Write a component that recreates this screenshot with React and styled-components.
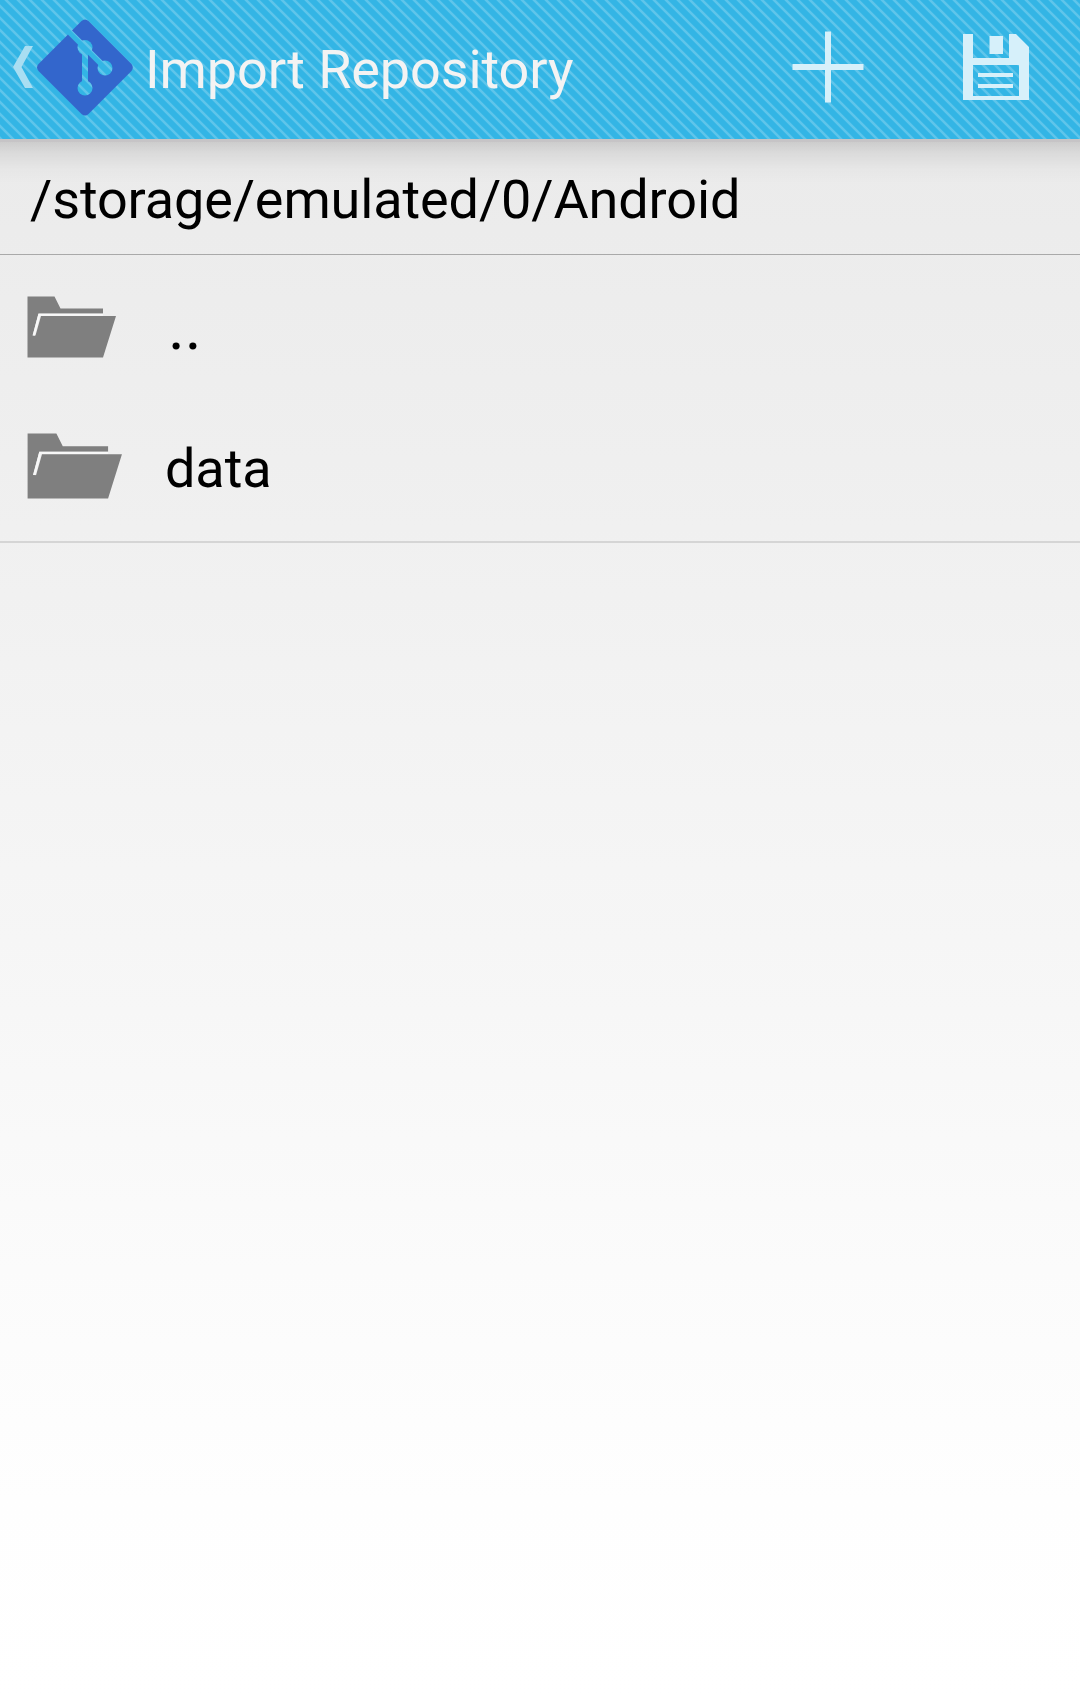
import React from "react";
import styled, { createGlobalStyle } from "styled-components";

const GlobalStyle = createGlobalStyle`
  * { box-sizing: border-box; }
  body { margin: 0; font-family: Roboto, "Noto Sans", sans-serif; }
  svg { display: block; flex: none; }
`;

const Screen = styled.main`
  display: flex;
  flex-direction: column;
  height: 1699px;
  overflow: hidden;
  background: linear-gradient(#e9e9e9 0, #ebebeb 160px, #ededed 300px, #efefef 460px, #f3f3f3 730px, #f7f7f7 1010px, #fbfbfb 1270px, #fefefe 1500px, #ffffff 1699px);
`;

const ActionBar = styled.header`
  position: relative;
  z-index: 1;
  display: flex;
  align-items: center;
  height: 139px;
  flex: none;
  padding: 0 51px 5px 13px;
  background: #33b5e5;
  box-shadow: 0 3px 0 #c6c4c6;
`;

const Stripes = styled.svg`
  position: absolute;
  inset: 0;
`;

const BarIcon = styled.svg`
  position: relative;
  margin-left: ${(p) => p.$gap || 0}px;
`;

const Title = styled.h1`
  position: relative;
  flex: 1;
  margin: 5px 0 0 12px;
  font-size: 54px;
  font-weight: 400;
  line-height: 64px;
  letter-spacing: -0.1px;
  color: #f3f3f3;
  white-space: nowrap;
`;

const PathBar = styled.div`
  height: 116px;
  flex: none;
  padding: 29px 30px 0;
  font-size: 54px;
  line-height: 64px;
  letter-spacing: -0.12px;
  color: #000;
  border-bottom: 1px solid #a9a9a9;
  background: linear-gradient(rgba(0, 0, 0, 0.13) 3px, rgba(0, 0, 0, 0.07) 14px, rgba(0, 0, 0, 0.02) 30px, rgba(0, 0, 0, 0) 45px);
`;

const FileList = styled.ul`
  margin: 0;
  padding: 0;
  list-style: none;
  height: 288px;
  border-bottom: 2px solid #d5d5d5;
`;

const FileRow = styled.li`
  display: flex;
  align-items: flex-start;
  height: 143px;
  padding: ${(p) => p.$top}px 0 0 26px;
  line-height: 64px;
  color: #000;
`;

const FileName = styled.span`
  margin: ${(p) => p.$top}px 0 0 ${(p) => p.$left}px;
  font-size: ${(p) => p.$size}px;
  letter-spacing: -0.1px;
`;

function FolderIcon({ width, height }) {
  return (
    <svg width={width} height={height} viewBox="0 0 91 64" preserveAspectRatio="none">
      <path fill="#7f7f7f" d="M1.500 1.500H28.500L34.500 13.500H77V18.500H12.500L6.500 40.500H9.500L15 21H90L77 62.500H1.500Z" />
      <path fill="none" stroke="#f8f8f8" strokeWidth="2" d="M77 19.700H13.200L7.800 40.500" />
    </svg>
  );
}

const files = [
  { name: "..", width: 91, height: 64, top: 40, textTop: 1, left: 51, size: 64 },
  { name: "data", width: 97, height: 68, top: 34, textTop: 5, left: 42, size: 54 },
];

export default function App() {
  return (
    <>
      <GlobalStyle />
      <Screen>
        <ActionBar>
          <Stripes width="1080" height="139">
            <defs>
              <pattern id="hatch" width="12" height="12" patternUnits="userSpaceOnUse">
                <path d="M-6 -12L18 12M-12 -6L12 18" stroke="#5fc5eb" strokeWidth="2.500" />
              </pattern>
            </defs>
            <rect width="1080" height="139" fill="url(#hatch)" />
          </Stripes>
          <BarIcon width="20" height="42" viewBox="0 0 20 42">
            <path d="M12 0H20L8.500 21L20 42H12L0 21Z" fill="#a9def2" />
          </BarIcon>
          <BarIcon width="97" height="97" viewBox="0 0 97 97" $gap={3}>
            <defs>
              <mask id="branches">
                <rect width="97" height="97" fill="#fff" />
                <path d="M28 7.500L69 48.500M49 29V69" stroke="#000" strokeWidth="6" />
                <circle cx="49" cy="28.500" r="7.500" />
                <circle cx="69" cy="49" r="7.500" />
                <circle cx="49" cy="69" r="7.500" />
              </mask>
            </defs>
            <path mask="url(#branches)" fill="#3366cc" d="M45.500 2Q49 -1 52.500 2L95.500 45Q98 48.500 95.500 52L52.500 95Q49 98 45.500 95L2.500 52Q-.5 48.500 2.500 45Z" />
          </BarIcon>
          <Title>Import Repository</Title>
          <BarIcon width="72" height="72" viewBox="0 0 72 72">
            <path d="M33 .5H39V33H71.500V39H39V71.500H33V39H.5V33H33Z" fill="#d6f0fa" />
          </BarIcon>
          <BarIcon width="66" height="66" viewBox="0 0 66 66" $gap={99}>
            <path fillRule="evenodd" fill="#d6f0fa" d="M0 0H10V24H46V0H53L66 13V66H0ZM10 31V62H56V31ZM26.500 2H40V20H26.500ZM15 39H50V43H15ZM15 50H50V54H15Z" />
          </BarIcon>
        </ActionBar>
        <PathBar>/storage/emulated/0/Android</PathBar>
        <FileList>
          {files.map((f) => (
            <FileRow key={f.name} $top={f.top}>
              <FolderIcon width={f.width} height={f.height} />
              <FileName $top={f.textTop} $left={f.left} $size={f.size}>{f.name}</FileName>
            </FileRow>
          ))}
        </FileList>
      </Screen>
    </>
  );
}
